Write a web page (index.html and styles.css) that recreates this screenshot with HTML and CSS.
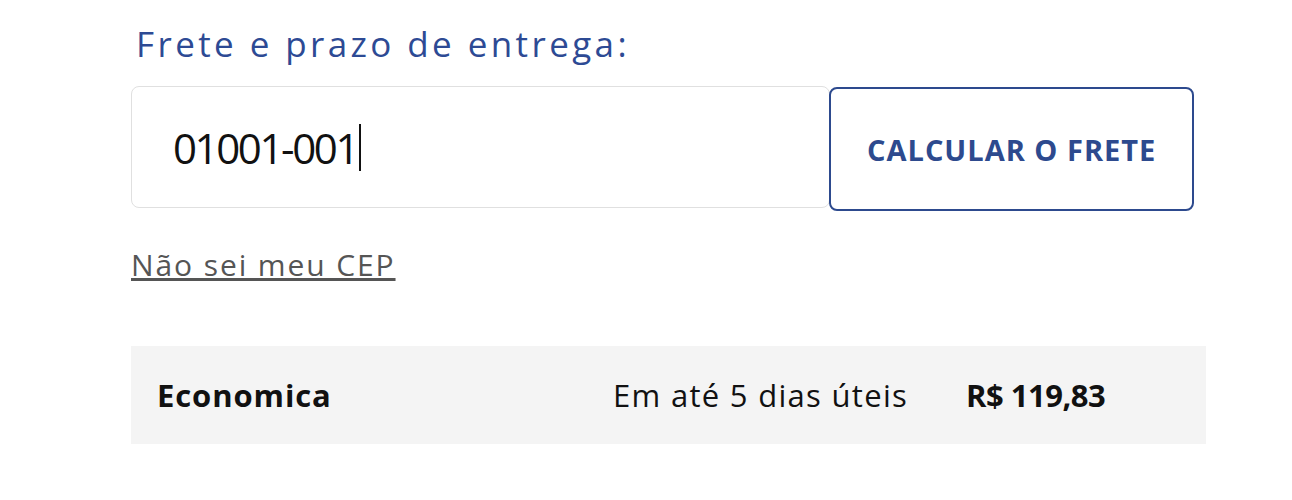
FILE: index.html
```html
<!DOCTYPE html>
<html lang="pt-BR">
<head>
    <meta charset="UTF-8">
    <meta name="viewport" content="width=device-width, initial-scale=1.0">
    <title>Frete e prazo de entrega</title>
    <link rel="stylesheet" href="styles.css">
</head>
<body>

    <section class="shipping">
        <h2 class="shipping-title">Frete e prazo de entrega:</h2>

        <!-- Cálculo do frete -->
        <form class="shipping-form">
            <div class="cep-field">
                <span class="cep-value">01001-001</span><span class="caret"></span>
            </div>
            <button type="submit" class="calc-btn">CALCULAR O FRETE</button>
        </form>

        <a href="#" class="cep-link">Não sei meu CEP</a>

        <!-- Resultado -->
        <div class="shipping-result">
            <span class="result-name">Economica</span>
            <span class="result-time">Em até 5 dias úteis</span>
            <span class="result-price">R$ 119,83</span>
        </div>
    </section>

</body>
</html>
```

FILE: styles.css
```css
body {
    font-family: "Open Sans", Lato, sans-serif;
    background-color: #fff;
    margin: 0;
}

.shipping {
    width: 1075px;
    padding: 22px 0 0 131px;
}

.shipping-title {
    margin: 0 0 17px 5px;
    font-size: 35px;
    font-weight: 400;
    letter-spacing: 3.4px;
    color: #2d4a94;
    line-height: 44px;
}

.shipping-form {
    display: flex;
    align-items: center;
    width: 1063px;
}

.cep-field {
    display: flex;
    align-items: center;
    width: 657px;
    height: 120px;
    padding-left: 41px;
    border: 1px solid #e0e0e0;
    border-radius: 8px;
}

.cep-value {
    font-size: 42px;
    letter-spacing: -2.4px;
    color: #111;
}

.caret {
    display: inline-block;
    width: 2px;
    height: 47px;
    margin-left: 2px;
    background-color: #111;
}

.calc-btn {
    width: 365px;
    height: 124px;
    margin: 4px 0 0 -1px;
    background-color: #fff;
    border: 2px solid #2d4a8e;
    border-radius: 8px;
    font-family: "Open Sans", sans-serif;
    font-size: 29px;
    font-weight: 700;
    letter-spacing: 1px;
    color: #2d4a8e;
    cursor: pointer;
}

.cep-link {
    display: inline-block;
    margin-top: 34px;
    font-size: 30px;
    line-height: 40px;
    letter-spacing: 1.9px;
    color: #555;
}

.shipping-result {
    display: flex;
    align-items: center;
    height: 98px;
    margin-top: 61px;
    padding-left: 26px;
    background-color: #f4f4f4;
    font-size: 31px;
    color: #111;
}

.result-name {
    width: 456px;
    font-weight: 700;
    letter-spacing: 0.9px;
}

.result-time {
    width: 353px;
    letter-spacing: 1.3px;
}

.result-price {
    font-weight: 700;
    letter-spacing: -0.5px;
}
```
